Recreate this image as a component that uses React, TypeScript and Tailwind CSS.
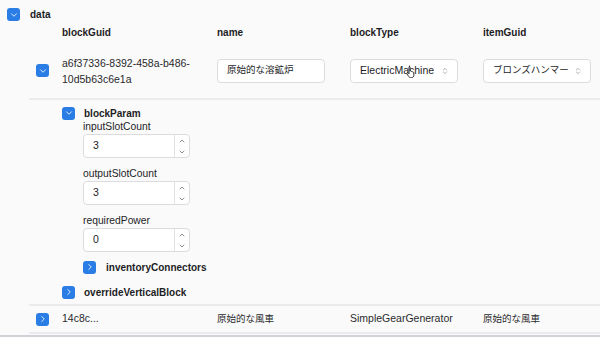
import React from 'react';
import { ChevronDown, ChevronRight, ChevronUp, ChevronsUpDown } from 'lucide-react';

const font = { fontFamily: '"Liberation Sans", "Noto Sans CJK JP", sans-serif' };

function Toggle({ open }: { open: boolean }) {
  return (
    <div className="h-[13px] w-[13px] flex-shrink-0 rounded-[3px] bg-[#2a7de4] flex items-center justify-center">
      {open ? (
        <ChevronDown className="h-[10px] w-[10px] text-white" strokeWidth={2} />
      ) : (
        <ChevronRight className="h-[10px] w-[10px] text-white" strokeWidth={2} />
      )}
    </div>
  );
}

function NumberField({ label, value }: { label: string; value: string }) {
  return (
    <div className="flex flex-col">
      <div className="h-[14px] flex items-center text-[10.3px] text-[#1d1d1f]">{label}</div>
      <div className="h-[24px] w-[107px] flex rounded-[4px] border border-[#dcdce0] bg-white">
        <div className="flex-1 flex items-center pl-[9px] text-[10.5px] text-[#1d1d1f]">{value}</div>
        <div className="w-[15px] border-l border-[#e2e2e6] flex flex-col items-center justify-center text-[#555]">
          <ChevronUp className="h-[8px] w-[8px]" strokeWidth={2} />
          <ChevronDown className="h-[8px] w-[8px] mt-[3px]" strokeWidth={2} />
        </div>
      </div>
    </div>
  );
}

function SelectBox({ value, jp }: { value: string; jp?: boolean }) {
  return (
    <div className="h-[24px] w-[108px] flex items-center rounded-[4px] border border-[#dcdce0] bg-white pl-[9px] pr-[8px]">
      <div className={`flex-1 overflow-hidden whitespace-nowrap text-[#1d1d1f] ${jp ? 'text-[9.5px]' : 'text-[10.5px]'}`}>
        {value}
      </div>
      <ChevronsUpDown className="h-[8px] w-[8px] ml-[4px] text-[#8a8a8e]" strokeWidth={2} />
    </div>
  );
}

export default function App() {
  return (
    <div className="relative w-[600px] h-[338px] overflow-hidden bg-[#fafafb]" style={font}>
      {/* data header */}
      <div className="flex items-center gap-[10px] pl-[7px] pt-[8px]">
        <Toggle open />
        <span className="text-[10px] font-bold text-[#1d1d1f] leading-[13px]">data</span>
      </div>

      <div className="ml-[29px]">
        {/* column headers */}
        <div className="grid grid-cols-[33px_155px_133px_133px_1fr] h-[22px] items-center text-[10px] font-bold text-[#1d1d1f]">
          <div />
          <div>blockGuid</div>
          <div>name</div>
          <div>blockType</div>
          <div>itemGuid</div>
        </div>

        {/* row 1 */}
        <div className="grid grid-cols-[33px_155px_133px_133px_1fr] h-[57px] items-center border-b-2 border-[#ebebee]">
          <div className="pl-[7px]">
            <Toggle open />
          </div>
          <div className="text-[10.5px] leading-[16px] text-[#2a2a2c]">
            a6f37336-8392-458a-b486-
            <br />
            10d5b63c6e1a
          </div>
          <div>
            <div className="h-[24px] w-[108px] flex items-center rounded-[4px] border border-[#dcdce0] bg-white pl-[9px] text-[9.5px] text-[#1d1d1f]">
              原始的な溶鉱炉
            </div>
          </div>
          <div className="relative">
            <SelectBox value="ElectricMachine" />
            <svg className="absolute left-[56px] top-[6px]" width="11" height="13" viewBox="0 0 11 13">
              <path
                d="M3 1.2c.6 0 1 .4 1 1V6l.3-.1c.5-.2 1 .1 1.1.5.5-.2 1 .1 1.1.5.5-.2 1.1.1 1.2.6l.2 2.6c0 1.6-1.2 2.6-2.7 2.6H4.6c-.8 0-1.4-.4-1.8-1L1 9c-.3-.5-.1-1 .3-1.2.4-.2.8 0 1.1.3l.6.7V2.2c0-.6.4-1 1-1z"
                fill="white"
                stroke="#222"
                strokeWidth="0.9"
              />
            </svg>
          </div>
          <div>
            <SelectBox value="ブロンズハンマー" jp />
          </div>
        </div>

        {/* nested blockParam */}
        <div className="pl-[33px] pt-[7px] pb-[6px] border-b-2 border-[#ebebee]">
          <div className="flex items-center gap-[9px] h-[12px]">
            <Toggle open />
            <span className="text-[10px] font-bold text-[#1d1d1f]">blockParam</span>
          </div>
          <div className="pl-[21px] pt-[1px] flex flex-col gap-[9px]">
            <NumberField label="inputSlotCount" value="3" />
            <NumberField label="outputSlotCount" value="3" />
            <NumberField label="requiredPower" value="0" />
            <div className="flex items-center gap-[10px] h-[12px]">
              <Toggle open={false} />
              <span className="text-[10px] font-bold text-[#1d1d1f]">inventoryConnectors</span>
            </div>
          </div>
          <div className="flex items-center gap-[9px] h-[12px] mt-[13px]">
            <Toggle open={false} />
            <span className="text-[10px] font-bold text-[#1d1d1f]">overrideVerticalBlock</span>
          </div>
        </div>

        {/* row 2 */}
        <div className="grid grid-cols-[33px_155px_133px_133px_1fr] h-[28px] items-center border-b-2 border-[#ebebee] text-[10.5px] text-[#2a2a2c]">
          <div className="pl-[7px]">
            <Toggle open={false} />
          </div>
          <div>14c8c...</div>
          <div className="text-[9.5px]">原始的な風車</div>
          <div>SimpleGearGenerator</div>
          <div className="text-[9.5px]">原始的な風車</div>
        </div>
      </div>

      <div className="mt-[1px] h-[2px] bg-[#d2d2d8]" />
    </div>
  );
}
